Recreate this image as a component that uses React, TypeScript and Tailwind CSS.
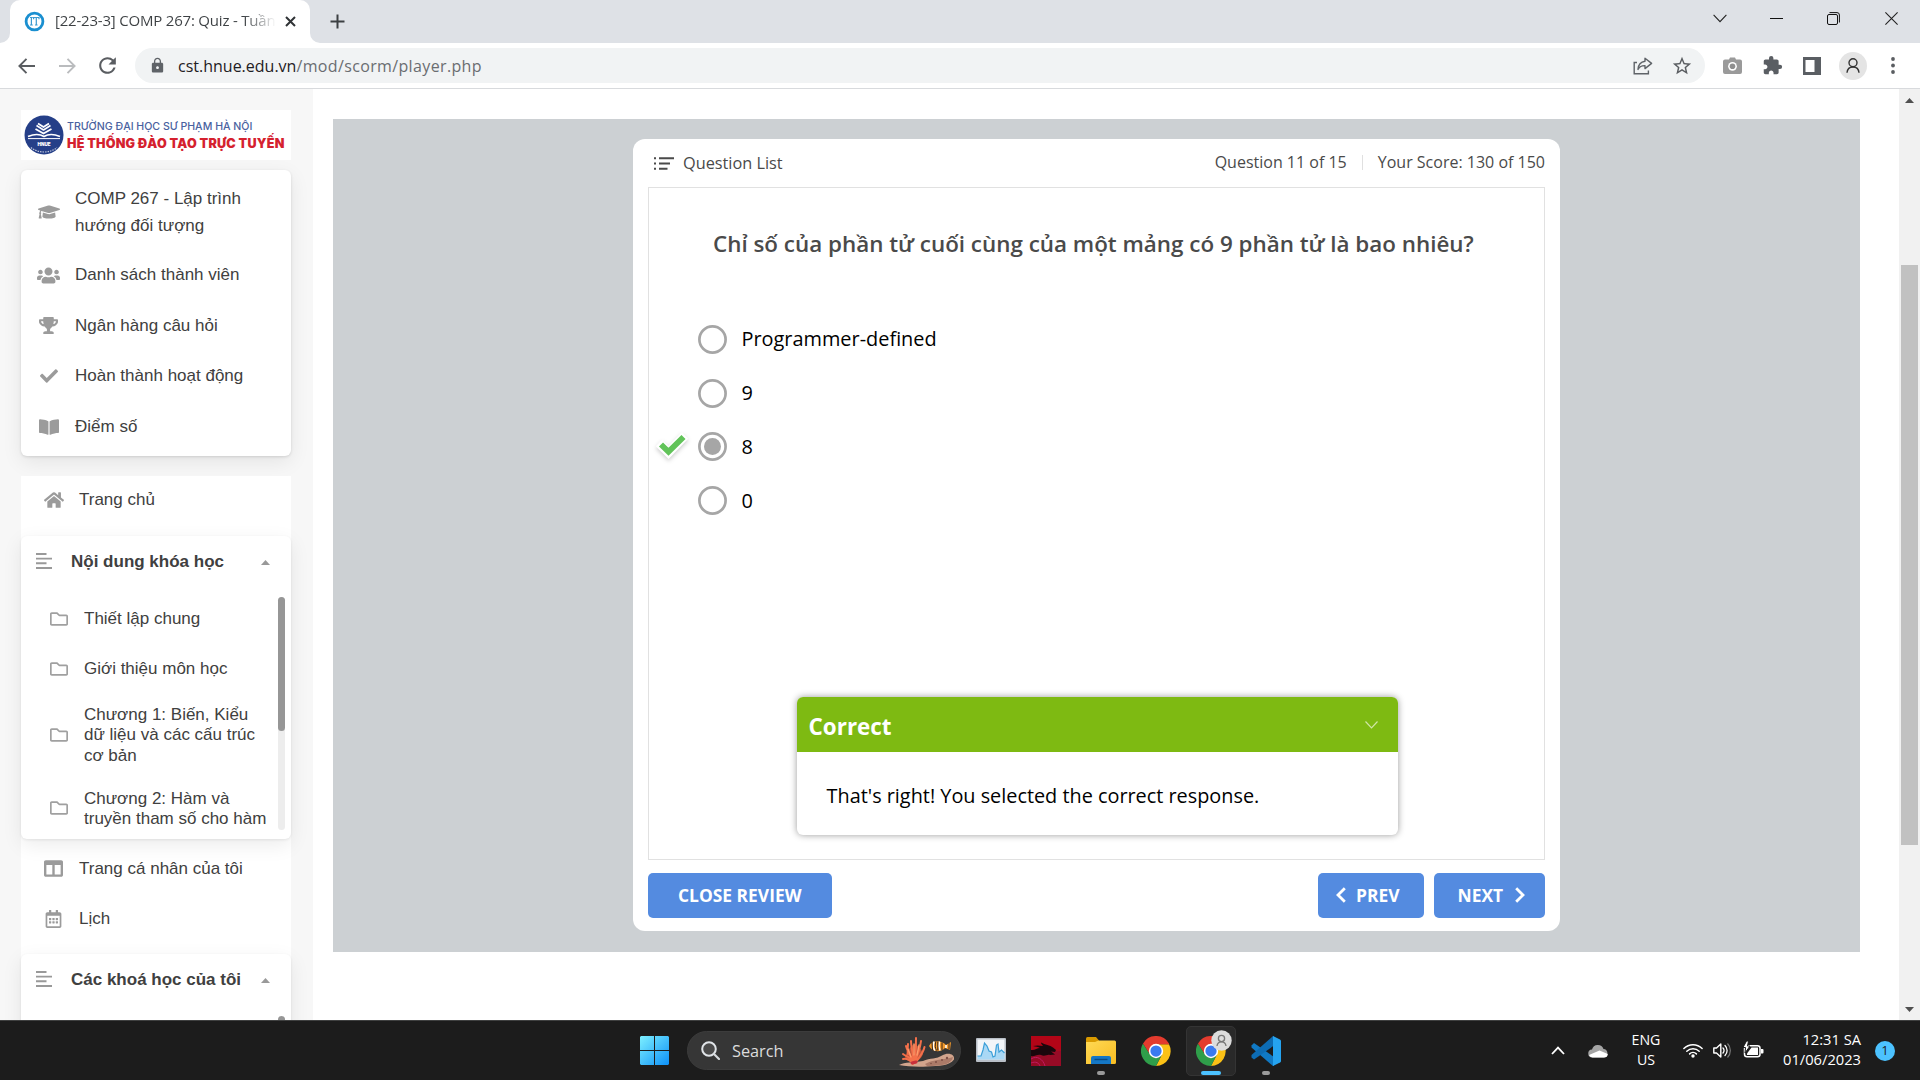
import type { ReactNode } from "react";
import { FaBookOpen, FaCheck, FaColumns, FaGraduationCap, FaHome, FaRegCalendarAlt, FaRegFolder, FaTrophy, FaUsers } from "react-icons/fa";
import { MdExtension, MdLock, MdRefresh, MdStarBorder } from "react-icons/md";

/* ---------- Browser chrome ---------- */

function TabStrip() {
  return (
    <div className="flex h-[43px] bg-[#dee1e6]">
      <div className="relative ml-[10px] flex w-[300px] rounded-t-[10px] bg-white">
        <svg className="absolute bottom-0 -left-[10px]" width="10" height="10"><path d="M10 0V10H0A10 10 0 0 0 10 0Z" fill="#fff" /></svg>
        <svg className="absolute bottom-0 -right-[10px]" width="10" height="10"><path d="M0 0V10H10A10 10 0 0 1 0 0Z" fill="#fff" /></svg>
        <svg className="mt-[11px] ml-[14px] shrink-0" width="21" height="21" viewBox="0 0 21 21">
          <circle cx="10.5" cy="10.5" r="8.4" fill="#fff" stroke="#1a8fd0" strokeWidth="2.8" />
          <path d="M6 6.5H8.8M7.4 6.5V14M6 14H8.8M9.6 8.2V6.5H15V8.2M12.3 6.5V14M11 14H13.6" fill="none" stroke="#3b9ad0" strokeWidth="1.2" />
        </svg>
        <div className="ml-[10px] h-[40px] w-[221px] overflow-hidden whitespace-nowrap bg-gradient-to-r from-[#3c4043] from-85% to-white bg-clip-text text-[15px] leading-[41px] tracking-[-0.2px] text-transparent">
          [22-23-3] COMP 267: Quiz - Tuần
        </div>
        <svg className="mt-[16px] ml-[9px]" width="11" height="11" viewBox="0 0 11 11"><path d="M1 1L10 10M10 1L1 10" stroke="#303336" strokeWidth="2" /></svg>
      </div>
      <svg className="mt-[14px] ml-[20px]" width="15" height="15" viewBox="0 0 15 15"><path d="M7.5 0.5V14.5M0.5 7.5H14.5" stroke="#3c4043" strokeWidth="2" /></svg>
      <div className="flex-1" />
      <svg className="mt-[14px]" width="14" height="9" viewBox="0 0 14 9"><path d="M0.6 0.8L7 7.6L13.4 0.8" fill="none" stroke="#222" strokeWidth="1.1" /></svg>
      <svg className="mt-[18px] ml-[43px]" width="13" height="1"><rect width="13" height="1" fill="#111" /></svg>
      <svg className="mt-[12px] ml-[44px]" width="13" height="13" viewBox="0 0 13 13">
        <rect x="0.5" y="2.5" width="10" height="10" rx="1.5" fill="none" stroke="#111" />
        <path d="M2.5 0.6H10A2.4 2.4 0 0 1 12.4 3V10.5" fill="none" stroke="#111" />
      </svg>
      <svg className="mt-[12px] mr-[22px] ml-[45px]" width="13" height="13" viewBox="0 0 13 13"><path d="M0.4 0.4L12.6 12.6M12.6 0.4L0.4 12.6" stroke="#222" strokeWidth="1.1" /></svg>
    </div>
  );
}

function Toolbar() {
  return (
    <div className="flex h-[46px] items-center border-b border-[#d8dadd] bg-white">
      <svg className="ml-[18px]" width="17" height="16" viewBox="0 0 17 16"><path d="M8.5 0.8L1.4 8L8.5 15.2M1.4 8H17" fill="none" stroke="#5a5d61" strokeWidth="1.9" /></svg>
      <svg className="ml-[24px]" width="17" height="16" viewBox="0 0 17 16"><path d="M8.5 0.8L15.6 8L8.5 15.2M15.6 8H0" fill="none" stroke="#babcbe" strokeWidth="1.9" /></svg>
      <MdRefresh className="ml-[19px] h-[25px] w-[25px] text-[#5a5d61]" />
      <div className="ml-[15px] flex h-[35px] w-[1570px] items-center rounded-full bg-[#f1f3f4]">
        <MdLock className="ml-[14px] h-[17px] w-[17px] text-[#5f6368]" />
        <span className="ml-[12px] text-[16px] text-[#1f2023]">cst.hnue.edu.vn</span>
        <span className="text-[16px] tracking-[0.36px] text-[#6a6d71]">/mod/scorm/player.php</span>
        <div className="flex-1" />
        <svg width="20" height="18" viewBox="0 0 20 18">
          <path d="M4 5.5H1.2V16.8H15.4V13.5" fill="none" stroke="#5f6368" strokeWidth="1.4" />
          <path d="M12 1.2L18.6 6.4L12 11.6V8.6C8.5 8.5 6.4 9.7 5 12.4C5.3 7.8 7.9 4.7 12 4.2Z" fill="none" stroke="#5f6368" strokeWidth="1.4" strokeLinejoin="round" />
        </svg>
        <MdStarBorder className="mr-[12px] ml-[18px] h-[22px] w-[22px] text-[#5a5d61]" />
      </div>
      <svg className="ml-[18px]" width="19" height="17" viewBox="0 0 19 17">
        <path d="M6 2.5L7 0.5H12L13 2.5H17A2 2 0 0 1 19 4.5V15A2 2 0 0 1 17 17H2A2 2 0 0 1 0 15V4.500A2 2 0 0 1 2 2.5Z" fill="#9a9a9a" />
        <circle cx="9.5" cy="9.3" r="4.4" fill="#fff" /><circle cx="9.5" cy="9.3" r="2.8" fill="#8f8f8f" />
      </svg>
      <MdExtension className="ml-[20px] h-[21px] w-[21px] text-[#5a5e63]" />
      <svg className="ml-[20px]" width="18" height="18" viewBox="0 0 18 18"><rect width="18" height="18" fill="#5a5e63" /><rect x="2.5" y="3" width="9" height="12" fill="#fff" /></svg>
      <div className="ml-[18px] flex h-[28px] w-[28px] items-center justify-center rounded-full bg-[#e4e4e4]">
        <svg width="14" height="15" viewBox="0 0 14 15"><circle cx="7" cy="4.8" r="4" fill="none" stroke="#333" strokeWidth="1.4" /><path d="M1 14.8C1.3 11 3.5 9 7 9S12.7 11 13 14.8" fill="none" stroke="#333" strokeWidth="1.4" /></svg>
      </div>
      <svg className="ml-[24px]" width="4" height="17" viewBox="0 0 4 17"><circle cx="2" cy="2" r="1.9" fill="#5a5d61" /><circle cx="2" cy="8.5" r="1.9" fill="#5a5d61" /><circle cx="2" cy="15" r="1.9" fill="#5a5d61" /></svg>
    </div>
  );
}

/* ---------- Sidebar ---------- */

function Logo() {
  return (
    <div className="mt-[21px] flex h-[50px] shrink-0 bg-white">
      <svg className="mt-[5px] ml-[3px] shrink-0" width="40" height="40" viewBox="0 0 40 40">
        <circle cx="20" cy="20" r="19.5" fill="#253f88" />
        <g fill="none" stroke="#fff" strokeLinejoin="round">
          <path d="M14 8.5L19.5 12L25 8.5" strokeWidth="1.8" />
          <path d="M12.5 10.5L19.5 15L26.5 10.5" strokeWidth="1.6" />
          <path d="M11.5 14L19.5 18.5L27.5 14" strokeWidth="1.8" />
          <path d="M4 21.5C10 19 16 19 20 21.5C24 19 30 19 36 21.5" strokeWidth="1.6" />
          <path d="M4 23.6H36" strokeWidth="1" />
          <path d="M7 32.5C14 38.5 26 38.5 33 32.5" strokeWidth="1.2" strokeDasharray="1.5 1" opacity=".7" />
        </g>
        <text x="20" y="31" textAnchor="middle" fontFamily="Inter" fontWeight="900" fontSize="4.6" fill="#fff">HNUE</text>
      </svg>
      <div className="ml-[3px] font-['Inter',sans-serif] whitespace-nowrap">
        <div className="mt-[8px] h-[17px] text-[10.6px] leading-[17px] font-medium text-[#4a62a0]">TRƯỜNG ĐẠI HỌC SƯ PHẠM HÀ NỘI</div>
        <div className="text-[12.6px] leading-[18px] font-black tracking-[0.2px] text-[#d5212e]">HỆ THỐNG ĐÀO TẠO TRỰC TUYẾN</div>
      </div>
    </div>
  );
}

function CourseLink({ icon, children }: { icon: ReactNode; children: ReactNode }) {
  return (
    <div className="flex items-center py-[12px]">
      <span className="ml-[16px] flex w-[23px] justify-center text-[#9b9b9b]">{icon}</span>
      <span className="ml-[15px] text-[17px] leading-[26.5px]">{children}</span>
    </div>
  );
}

function AlignIcon() {
  return (
    <svg width="16" height="16" viewBox="0 0 16 16" className="shrink-0">
      <path d="M0 1H10.5M0 5.6H16M0 10.2H10.5M0 15H16" stroke="#999" strokeWidth="1.9" />
    </svg>
  );
}

function GroupHeader({ title }: { title: string }) {
  return (
    <div className="flex h-[50px] items-center pr-[21px] pl-[15px]">
      <AlignIcon />
      <span className="ml-[19px] flex-1 pt-[2px] text-[17px] font-bold">{title}</span>
      <svg width="9" height="5" className="mt-[3px]"><path d="M4.5 0L9 5H0Z" fill="#999" /></svg>
    </div>
  );
}

function FolderLink({ top, lines }: { top: string; lines: string[] }) {
  return (
    <div className={`flex items-center ${top}`}>
      <FaRegFolder className="-mt-[1px] ml-[29px] h-[18px] w-[18px] shrink-0 text-[#a0a0a0]" />
      <div className="ml-[16px] text-[17px] leading-[20.4px] whitespace-nowrap">
        {lines.map((l) => <div key={l}>{l}</div>)}
      </div>
    </div>
  );
}

function Sidebar() {
  return (
    <aside className="flex h-full w-[313px] shrink-0 flex-col overflow-hidden bg-[#f7f7f7] px-[21px] pr-[22px] font-['Liberation_Sans',Arial,sans-serif] text-[#404040]">
      <Logo />
      <div className="mt-[10px] h-[286px] shrink-0 rounded-[6px] bg-white pt-[3px] shadow-[0_6px_20px_rgba(0,0,0,0.08),0_1px_3px_rgba(0,0,0,0.12)]">
        <div className="-mb-px pt-px">
          <CourseLink icon={<FaGraduationCap size={22} className="-mt-[1px]" />}>COMP 267 - Lập trình<br />hướng đối tượng</CourseLink>
        </div>
        <CourseLink icon={<FaUsers size={23} />}>Danh sách thành viên</CourseLink>
        <CourseLink icon={<FaTrophy size={19} />}>Ngân hàng câu hỏi</CourseLink>
        <CourseLink icon={<FaCheck size={18} />}>Hoàn thành hoạt động</CourseLink>
        <CourseLink icon={<FaBookOpen size={20} />}>Điểm số</CourseLink>
      </div>
      <div className="mt-[20px] h-[560px] shrink-0 bg-white">
        <div className="flex h-[60px] items-start pt-[14px]">
          <FaHome className="ml-[23px] h-[20px] w-[20px] text-[#9b9b9b]" />
          <span className="ml-[15px] text-[17px] leading-[19px]">Trang chủ</span>
        </div>
        <div className="flex h-[303px] flex-col rounded-[6px] bg-white shadow-[0_6px_20px_rgba(0,0,0,0.08),0_1px_3px_rgba(0,0,0,0.08)]">
          <GroupHeader title="Nội dung khóa học" />
          <div className="mt-[11px] flex h-[233px]">
            <div className="h-[233px] w-[257px] overflow-hidden">
              <FolderLink top="mt-[12px]" lines={["Thiết lập chung"]} />
              <FolderLink top="mt-[30px]" lines={["Giới thiệu môn học"]} />
              <FolderLink top="mt-[25px]" lines={["Chương 1: Biến, Kiểu", "dữ liệu và các cấu trúc", "cơ bản"]} />
              <FolderLink top="mt-[22.5px]" lines={["Chương 2: Hàm và", "truyền tham số cho hàm"]} />
            </div>
            <div className="h-[233px] w-[7px] rounded-full bg-[#ededed]"><div className="h-[134px] rounded-full bg-[#969696]" /></div>
          </div>
        </div>
        <div className="flex h-[59px] items-center">
          <FaColumns className="ml-[23px] h-[19px] w-[19px] text-[#9b9b9b]" />
          <span className="ml-[16px] text-[17px]">Trang cá nhân của tôi</span>
        </div>
        <div className="flex h-[41px] items-center">
          <FaRegCalendarAlt className="ml-[23px] h-[18px] w-[19px] text-[#9b9b9b]" />
          <span className="ml-[16px] text-[17px]">Lịch</span>
        </div>
        <div className="mt-[15px] h-[82px] rounded-t-[6px] bg-white shadow-[0_6px_20px_rgba(0,0,0,0.08),0_1px_3px_rgba(0,0,0,0.08)]">
          <GroupHeader title="Các khoá học của tôi" />
          <div className="mt-[12px] ml-[257px] h-[20px] w-[7px] rounded-full bg-[#969696]" />
        </div>
      </div>
    </aside>
  );
}

/* ---------- Quiz player ---------- */

function Option({ label, checked = false }: { label: string; checked?: boolean }) {
  return (
    <div className="flex h-[53.8px] items-center">
      <div className="flex w-[48.5px] pl-[6px]">
        {checked && (
          <svg width="34" height="32" viewBox="0 0 34 32" className="-mt-[2px] drop-shadow-[0_2px_2px_rgba(0,0,0,0.2)]">
            <path d="M4 13L13.5 22.5L30 5.5" fill="none" stroke="#fff" strokeWidth="9" />
            <path d="M6 14.500L13.5 21.8L28.500 7" fill="none" stroke="#61c359" strokeWidth="5.8" />
          </svg>
        )}
      </div>
      <svg width="29" height="29" viewBox="0 0 29 29">
        <circle cx="14.5" cy="14.5" r="13.1" fill="#fff" stroke="#a6a6a6" strokeWidth="2.7" />
        {checked && <circle cx="14.5" cy="14.5" r="8.5" fill="#a6a6a6" />}
      </svg>
      <span className="ml-[15px] text-[19.9px] text-black">{label}</span>
    </div>
  );
}

function Quiz() {
  return (
    <div className="flex h-[792px] w-[927px] flex-col rounded-[12px] bg-white px-[15px] text-[#4a4a4a]">
      <div className="flex h-[48px] items-center text-[16px]">
        <svg width="20" height="13" viewBox="0 0 20 13" className="ml-[6px]"><path d="M0 1.2H2M0 6.5H2M0 11.8H2M5 1.2H20M5 6.500H16M5 11.8H13.5" stroke="#4a4a4a" strokeWidth="2" /></svg>
        <span className="ml-[9px] text-[16.3px]">Question List</span>
        <div className="flex-1" />
        <span className="-mt-[2px]">Question 11 of 15</span>
        <div className="mx-[15px] -mt-[1px] h-[15px] w-px bg-[#e0e0e0]" />
        <span className="-mt-[2px]">Your Score: 130 of 150</span>
      </div>
      <div className="h-[673px] border border-[#e1e1e1]">
        <div className="mt-[37px] ml-[64px] text-[22.4px] leading-[38px] font-semibold whitespace-nowrap">Chỉ số của phần tử cuối cùng của một mảng có 9 phần tử là bao nhiêu?</div>
        <div className="mt-[49.4px]">
          <Option label="Programmer-defined" />
          <Option label="9" />
          <Option label="8" checked />
          <Option label="0" />
        </div>
        <div className="mt-[169.6px] ml-[147.6px] h-[138px] w-[601px] rounded-[6px] bg-white shadow-[0_0_7px_rgba(0,0,0,0.4)]">
          <div className="flex h-[55px] items-center rounded-t-[6px] bg-[#7eba12] pr-[20px] pl-[12px] text-white">
            <span className="flex-1 pt-[4px] text-[22.4px] font-bold">Correct</span>
            <svg width="13" height="8" viewBox="0 0 13 8"><path d="M0.5 0.5L6.5 6.8L12.5 0.5" fill="none" stroke="#d0e6a6" strokeWidth="1.2" /></svg>
          </div>
          <div className="pt-[25px] pl-[30px] text-[19.85px] leading-[38px] text-black">That's right! You selected the correct response.</div>
        </div>
      </div>
      <div className="mt-[12.5px] flex h-[45px] text-[17.4px] font-bold text-white">
        <button className="w-[183.5px] rounded-[5px] bg-[#548be0] pt-px">CLOSE REVIEW</button>
        <div className="flex-1" />
        <button className="flex w-[105.5px] items-center rounded-[5px] bg-[#548be0]">
          <svg width="10" height="16" viewBox="0 0 10 16" className="-mt-[1px] ml-[18px]"><path d="M8.8 1.2L2 8L8.8 14.8" fill="none" stroke="#fff" strokeWidth="2.8" /></svg>
          <span className="ml-[10px] pt-px">PREV</span>
        </button>
        <button className="ml-[10px] flex w-[111.5px] items-center rounded-[5px] bg-[#548be0]">
          <span className="ml-[24px] pt-px">NEXT</span>
          <svg width="10" height="16" viewBox="0 0 10 16" className="-mt-[1px] ml-[12px]"><path d="M1.2 1.2L8 8L1.2 14.8" fill="none" stroke="#fff" strokeWidth="2.8" /></svg>
        </button>
      </div>
    </div>
  );
}

/* ---------- Taskbar ---------- */

function ChromeIcon() {
  return (
    <svg width="30" height="30" viewBox="0 0 48 48">
      <path d="M24 13H44.8A24 24 0 0 1 24 48L33.5 29.5Z" fill="#fbc116" />
      <path d="M3.2 12L14.5 29.5A11 11 0 0 0 33.5 29.5L24 48A24 24 0 0 1 3.2 12Z" fill="#2f9e4a" />
      <path d="M3.2 12A24 24 0 0 1 44.8 12V13H24L14.5 29.5Z" fill="#e33b2e" />
      <circle cx="24" cy="24" r="11.5" fill="#fff" /><circle cx="24" cy="24" r="9" fill="#3a7af0" />
    </svg>
  );
}

function Coral() {
  return (
    <svg width="56" height="30" viewBox="0 0 56 30">
      <path d="M0 28C6 24.500 14 26 24 24C31 21 38 22 43 18.5C49 15 56 17 55 22.500C50 29 40 29 28 29.5C18 30 8 29.500 0 28Z" fill="#d3a58d" />
      <path d="M26 27C34 22 45 23 54 20C53 27 44 29 28 29Z" fill="#ab7a68" />
      <path d="M6 20C8 14 11 10 15 7C20 9 23 13 24 17C22 22 18 25 14 26C10 25 7 23 6 20Z" fill="#e8603f" opacity=".75" />
      <g fill="none" strokeLinecap="round">
        <path d="M14 27C13 20 8 20 4 17M14 26C12 17 8 14 7 9M15 26C14 16 12 9 12 4M15 26C17 18 17 10 17 1M15 26C19 18 21 12 22 4M16 26C20 20 24 17 25.5 10M4 22C8 21 11 23 14 26M9 17C8 13 9 10 9 7" stroke="#f4704a" strokeWidth="2" />
        <path d="M12 20L9 12M15 18L15 7M18 18L20 8" stroke="#ff9c6b" strokeWidth="1.3" />
        <path d="M13 26L17 25" stroke="#c8303c" strokeWidth="3" />
      </g>
      <path d="M30 9C33 3 42 3 47 8L52 5L51 13L46 11C41 16 33 15 30 9Z" fill="#f39a2b" />
      <path d="M35 4.5C34 8 34 11 36 13.5M40.5 4.5C39.5 8 40 11 41 13.5M47 8V11" stroke="#fff" strokeWidth="1.5" fill="none" />
      <path d="M36.8 4.5C36 8 36 11 37.5 13.5M38.8 4.5V13.5M43 5.5V13M50 6V12.5M33 5.5L33.5 13" stroke="#33231c" strokeWidth="1" fill="none" />
      <g fill="#7d4f45"><circle cx="37" cy="25" r="1" /><circle cx="43" cy="23" r="1" /><circle cx="48" cy="21" r="1.2" /><circle cx="32" cy="26.5" r="0.8" /></g>
    </svg>
  );
}

function TaskItem({ children, mark, gap = "ml-[25px]" }: { children: ReactNode; mark?: string; gap?: string }) {
  return (
    <div className={`relative flex h-[30px] w-[30px] items-center justify-center ${gap}`}>
      {children}
      {mark && <div className={`absolute -bottom-[9px] h-[4px] rounded-full ${mark}`} />}
    </div>
  );
}

function Taskbar() {
  return (
    <footer className="flex h-[60px] items-center border-t border-[#3f4040] bg-[#1c1c1c] text-white">
      <svg className="ml-[640px]" width="29" height="29" viewBox="0 0 29 29">
        <defs><linearGradient id="win" x1="0" y1="0" x2="29" y2="29" gradientUnits="userSpaceOnUse"><stop stopColor="#7df0ff" /><stop offset="1" stopColor="#0d90f7" /></linearGradient></defs>
        <path d="M1 0H14V14H0V1ZM15 0H28L29 1V14H15ZM0 15H14V29H1L0 28ZM15 15H29V28L28 29H15Z" fill="url(#win)" />
      </svg>
      <div className="ml-[17.5px] flex h-[39.5px] w-[274px] items-center rounded-full border border-[#3c3c3c] bg-[#363636]">
        <svg className="ml-[13.5px]" width="19" height="19" viewBox="0 0 19 19"><circle cx="8" cy="8" r="6.8" fill="#4a4a4a" stroke="#e0e4e8" strokeWidth="2" /><path d="M13 13L18 18" stroke="#d5d9dc" strokeWidth="2.2" strokeLinecap="round" /></svg>
        <span className="ml-[12px] flex-1 pt-px text-[16.3px] text-[#dcdcdc]">Search</span>
        <div className="mt-[3px] mr-[5px]"><Coral /></div>
      </div>
      <TaskItem gap="ml-[15.5px]">
        <svg width="30" height="24" viewBox="0 0 30 24" className="-mt-[2px]">
          <rect width="30" height="24" rx="1" fill="#b9bfc7" /><rect x="1.5" y="1.5" width="27" height="20" fill="#f2f5f8" />
          <path d="M1.5 18L5 18L7 12L8.5 5L11 8L13 13L15.5 14L17 19L19 18L20.5 7L22 6L23 14L25.5 12L28.5 15V21.5H1.5Z" fill="#a9d8f5" />
          <path d="M1.5 18L5 18L7 12L8.5 5L11 8L13 13L15.5 14L17 19L19 18L20.5 7L22 6L23 14L25.5 12L28.5 15" fill="none" stroke="#3b9fd8" strokeWidth="1.2" />
        </svg>
      </TaskItem>
      <TaskItem>
        <svg width="30" height="30" viewBox="0 0 30 30">
          <rect width="30" height="30" fill="#a90a1e" /><rect y="15" width="30" height="15" fill="#8c0c2c" opacity=".6" /><rect width="30" height="13" fill="#bb0212" opacity=".6" />
          <path d="M0 14C4 14.500 6 12 9 12C7 10.500 5 11 2 10C6 9 9 9.500 12 10C11 8.500 10 8 10 6.500C14 9 19 9 22 11.500L25 14L24 16L20 15.500L24 18.500L19 19C16 18 14 21 10 19C6 18 3 21 0 20Z" fill="#1a070c" />
          <path d="M0 23C6 19 12 23 14 30M0 27C5 25 8 27 9 30" fill="none" stroke="#c01a60" strokeWidth="1" />
        </svg>
      </TaskItem>
      <TaskItem mark="w-[8px] bg-[#9a9a9a]">
        <svg width="30" height="27" viewBox="0 0 30 27">
          <defs><linearGradient id="fold" x1="0" y1="0" x2="1" y2="1"><stop stopColor="#ffd955" /><stop offset="1" stopColor="#f8bd22" /></linearGradient></defs>
          <path d="M0 1.5Q0 0 1.5 0H10L13 3.5V8H0Z" fill="#d99a00" />
          <path d="M0 5H9L12.5 3.5H28.5Q30 3.5 30 5V25.5Q30 27 28.5 27H0Z" fill="url(#fold)" />
          <path d="M5 27V21Q5 19 7 19H23Q25 19 25 21V27Z" fill="#1577c5" /><path d="M8.5 22.5H21.5" stroke="#0a4b84" strokeWidth="1.4" />
        </svg>
      </TaskItem>
      <TaskItem><ChromeIcon /></TaskItem>
      <div className="ml-[15px] flex h-[50px] w-[50px] items-center justify-center rounded-[5px] border border-[#343434] bg-[#292929]">
        <TaskItem gap="ml-0" mark="w-[20px] bg-[#4cc2ff]">
          <ChromeIcon />
          <svg className="absolute -top-[6px] left-[15px]" width="21" height="21" viewBox="0 0 21 21">
            <circle cx="10.5" cy="10.5" r="10.2" fill="#dcdcdc" /><circle cx="10.5" cy="8.5" r="3.1" fill="none" stroke="#777" strokeWidth="1.3" /><path d="M6 16C6.3 13 7.8 11.8 10.5 11.8S14.7 13 15 16" fill="none" stroke="#777" strokeWidth="1.3" />
          </svg>
        </TaskItem>
      </div>
      <TaskItem gap="ml-[15px]" mark="w-[8px] bg-[#9a9a9a]">
        <svg width="30" height="30" viewBox="0 0 30 30">
          <path d="M0.500 9.500L3 7L23 21V29.500L22 30L0.500 11.500Z" fill="#1079c4" />
          <path d="M22 0L23 1V9.500L3 23.5L0.5 21.5V19Z" fill="#0d6cb4" />
          <path d="M22 0L29 3.5Q30 4 30 5V25Q30 26 29 26.5L22 30Z" fill="#25a3f0" />
        </svg>
      </TaskItem>
      <div className="flex-1" />
      <svg width="14" height="9" viewBox="0 0 14 9"><path d="M1 8L7 1.6L13 8" fill="none" stroke="#fff" strokeWidth="1.8" /></svg>
      <svg className="ml-[23px]" width="20" height="14" viewBox="0 0 20 14">
        <path d="M4.5 13.5A4 4 0 0 1 4 5.5A6 6 0 0 1 15.5 5A4.3 4.3 0 0 1 16 13.5Z" fill="#a5a5a5" />
        <path d="M1 11L11.5 6.5L19.8 10A3.8 3.8 0 0 1 16 13.6H4.5A4 4 0 0 1 1 11Z" fill="#fff" />
      </svg>
      <div className="-mt-px ml-[23px] w-[31px] text-center text-[14.2px] leading-[20px]">ENG<br />US</div>
      <svg className="ml-[21px]" width="20" height="15" viewBox="0 0 20 15">
        <g fill="none" stroke="#fff" strokeWidth="1.5" strokeLinecap="round"><path d="M0.9 5.5A13 13 0 0 1 19.1 5.5" /><path d="M3.8 8.3A9 9 0 0 1 16.2 8.3" /><path d="M6.6 10.9A5 5 0 0 1 13.4 10.9" /></g><circle cx="10" cy="13" r="1.7" fill="#fff" />
      </svg>
      <svg className="ml-[10px]" width="19" height="17" viewBox="0 0 19 17">
        <path d="M0.8 6H3.5L7.8 2V15L3.5 11H0.8Z" fill="none" stroke="#fff" strokeWidth="1.4" strokeLinejoin="round" />
        <path d="M10 6A3.5 3.5 0 0 1 10 11M12 3.5A7 7 0 0 1 12 13.5" fill="none" stroke="#fff" strokeWidth="1.3" strokeLinecap="round" /><path d="M14.5 1.5A10 10 0 0 1 14.5 15.5" fill="none" stroke="#777" strokeWidth="1.2" />
      </svg>
      <svg className="-mt-[3px] ml-[11px]" width="21" height="17" viewBox="0 0 21 17">
        <rect x="1.5" y="4.7" width="15.5" height="11" rx="2.5" fill="none" stroke="#fff" strokeWidth="1.5" /><path d="M8.5 6.5H15V14H4V12.5Z" fill="#fff" /><path d="M18 8H19.5Q20.5 8 20.5 9V11.5Q20.5 12.5 19.5 12.5H18Z" fill="#fff" />
        <path d="M3.5 0L0 6.5H2.5L2 12L7 5H4.5L5.5 0Z" fill="#fff" stroke="#1c1c1c" strokeWidth="1" />
      </svg>
      <div className="-mt-[3px] ml-[19px] w-[78.5px] text-right text-[14.7px] leading-[20px]">12:31 SA<br />01/06/2023</div>
      <div className="mr-[25px] ml-[14px] flex h-[20px] w-[20px] items-center justify-center rounded-full bg-[#4cc2ff] text-[13px] text-[#1c1c1c]">1</div>
    </footer>
  );
}

export default function App() {
  return (
    <div className="flex h-[1080px] w-[1920px] flex-col overflow-hidden bg-white font-['Open_Sans','Noto_Sans',sans-serif]">
      <TabStrip />
      <Toolbar />
      <div className="flex h-[931px]">
        <Sidebar />
        <main className="flex-1 overflow-hidden pt-[30px] pl-[20px]">
          <div className="flex h-[833px] w-[1527px] justify-center bg-[#ccd0d3] pt-[20px]"><Quiz /></div>
        </main>
        <div className="flex w-[21px] flex-col items-center bg-[#f1f1f1]">
          <svg className="mt-[9px]" width="9" height="5"><path d="M4.5 0L9 5H0Z" fill="#505050" /></svg>
          <div className="mt-[162px] h-[580px] w-[17px] bg-[#c1c1c1]" />
          <div className="flex-1" />
          <svg className="mb-[8px]" width="9" height="5"><path d="M4.5 5L9 0H0Z" fill="#505050" /></svg>
        </div>
      </div>
      <Taskbar />
    </div>
  );
}
